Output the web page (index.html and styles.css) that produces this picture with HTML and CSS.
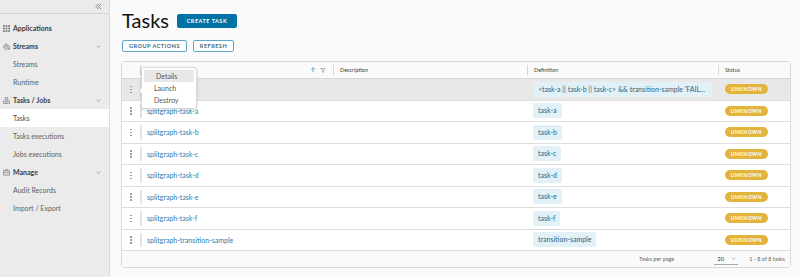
FILE: index.html
```html
<!DOCTYPE html>
<html lang="en">
<head>
    <meta charset="UTF-8">
    <meta name="viewport" content="width=device-width, initial-scale=1.0">
    <title>Tasks</title>
    <link rel="stylesheet" href="styles.css">
</head>
<body>
    <div class="app">
        <nav class="sidebar">
            <div class="sidebar-top">
                <svg class="collapse" viewBox="0 0 8 8" width="7" height="7"><polyline points="4,1 1,4 4,7" /><polyline points="7,1 4,4 7,7" /></svg>
            </div>
            <ul class="nav">
                <li class="nav-title">
                    <svg class="nav-icon" viewBox="0 0 8 8"><g class="fill"><rect x="0" y="0" width="2" height="2"/><rect x="3" y="0" width="2" height="2"/><rect x="6" y="0" width="2" height="2"/><rect x="0" y="3" width="2" height="2"/><rect x="3" y="3" width="2" height="2"/><rect x="6" y="3" width="2" height="2"/><rect x="0" y="6" width="2" height="2"/><rect x="3" y="6" width="2" height="2"/><rect x="6" y="6" width="2" height="2"/></g></svg>
                    Applications
                </li>
                <li class="nav-title">
                    <svg class="nav-icon" viewBox="0 0 8 8"><path d="M0.5 4.5 L3 1 L7.5 3.5 L7.5 7 L2 7 Z M0.5 4.5 L5 4.5 L7.5 7 M3 1 L5 4.5" /></svg>
                    Streams
                    <svg class="chevron" viewBox="0 0 8 8"><polyline points="1,2.5 4,5.5 7,2.5" /></svg>
                </li>
                <li class="nav-link">Streams</li>
                <li class="nav-link">Runtime</li>
                <li class="nav-title">
                    <svg class="nav-icon" viewBox="0 0 8 8"><path d="M2.5 0.5 H5.5 V3 H2.5 Z M0.5 4.5 H3.5 V7.5 H0.5 Z M4.5 4.5 H7.5 V7.5 H4.5 Z" /></svg>
                    Tasks / Jobs
                    <svg class="chevron" viewBox="0 0 8 8"><polyline points="1,2.5 4,5.5 7,2.5" /></svg>
                </li>
                <li class="nav-link active">Tasks</li>
                <li class="nav-link">Tasks executions</li>
                <li class="nav-link">Jobs executions</li>
                <li class="nav-title">
                    <svg class="nav-icon" viewBox="0 0 8 8"><path d="M0.5 2 H7.5 V7 H0.5 Z M2.7 2 V0.8 H5.3 V2 M0.5 4.2 H7.5" /></svg>
                    Manage
                    <svg class="chevron" viewBox="0 0 8 8"><polyline points="1,2.5 4,5.5 7,2.5" /></svg>
                </li>
                <li class="nav-link">Audit Records</li>
                <li class="nav-link">Import / Export</li>
            </ul>
        </nav>

        <main class="content">
            <div class="title-row">
                <h1>Tasks</h1>
                <button class="btn btn-primary">Create task</button>
            </div>
            <div class="actions">
                <button class="btn btn-outline">Group actions</button>
                <button class="btn btn-outline">Refresh</button>
            </div>

            <div class="datagrid">
                <div class="dg-row dg-head">
                    <div class="dg-action"></div>
                    <div class="dg-th name-head">
                        <span class="sort">
                            <svg viewBox="0 0 8 8" width="6" height="6"><path class="up" d="M4 1 V7 M1.8 3.2 L4 1 L6.2 3.2" /></svg>
                            <svg viewBox="0 0 8 8" width="6" height="6"><path class="funnel" d="M1 2 H7 L4.6 4.6 V7 H3.4 V4.6 Z" /></svg>
                        </span>
                    </div>
                    <div class="dg-th">Description</div>
                    <div class="dg-th">Definition</div>
                    <div class="dg-th">Status</div>
                </div>

                <div class="dg-row selected">
                    <div class="dg-action"><span class="kebab"></span></div>
                    <div class="dg-td name"></div>
                    <div class="dg-td"></div>
                    <div class="dg-td"><span class="def long">&lt;task-a || task-b || task-c&gt; &amp;&amp; transition-sample 'FAIL...</span></div>
                    <div class="dg-td"><span class="status">UNKNOWN</span></div>
                </div>
                <div class="dg-row">
                    <div class="dg-action"><span class="kebab"></span></div>
                    <div class="dg-td name"><a href="#">splitgraph-task-a</a></div>
                    <div class="dg-td"></div>
                    <div class="dg-td"><span class="def">task-a</span></div>
                    <div class="dg-td"><span class="status">UNKNOWN</span></div>
                </div>
                <div class="dg-row">
                    <div class="dg-action"><span class="kebab"></span></div>
                    <div class="dg-td name"><a href="#">splitgraph-task-b</a></div>
                    <div class="dg-td"></div>
                    <div class="dg-td"><span class="def">task-b</span></div>
                    <div class="dg-td"><span class="status">UNKNOWN</span></div>
                </div>
                <div class="dg-row">
                    <div class="dg-action"><span class="kebab"></span></div>
                    <div class="dg-td name"><a href="#">splitgraph-task-c</a></div>
                    <div class="dg-td"></div>
                    <div class="dg-td"><span class="def">task-c</span></div>
                    <div class="dg-td"><span class="status">UNKNOWN</span></div>
                </div>
                <div class="dg-row">
                    <div class="dg-action"><span class="kebab"></span></div>
                    <div class="dg-td name"><a href="#">splitgraph-task-d</a></div>
                    <div class="dg-td"></div>
                    <div class="dg-td"><span class="def">task-d</span></div>
                    <div class="dg-td"><span class="status">UNKNOWN</span></div>
                </div>
                <div class="dg-row">
                    <div class="dg-action"><span class="kebab"></span></div>
                    <div class="dg-td name"><a href="#">splitgraph-task-e</a></div>
                    <div class="dg-td"></div>
                    <div class="dg-td"><span class="def">task-e</span></div>
                    <div class="dg-td"><span class="status">UNKNOWN</span></div>
                </div>
                <div class="dg-row">
                    <div class="dg-action"><span class="kebab"></span></div>
                    <div class="dg-td name"><a href="#">splitgraph-task-f</a></div>
                    <div class="dg-td"></div>
                    <div class="dg-td"><span class="def">task-f</span></div>
                    <div class="dg-td"><span class="status">UNKNOWN</span></div>
                </div>
                <div class="dg-row">
                    <div class="dg-action"><span class="kebab"></span></div>
                    <div class="dg-td name"><a href="#">splitgraph-transition-sample</a></div>
                    <div class="dg-td"></div>
                    <div class="dg-td"><span class="def">transition-sample</span></div>
                    <div class="dg-td"><span class="status">UNKNOWN</span></div>
                </div>

                <div class="dg-footer">
                    <span class="per-page">Tasks per page</span>
                    <span class="page-select">20
                        <svg viewBox="0 0 8 8" width="5" height="5"><polyline points="1,2.5 4,5.5 7,2.5" /></svg>
                    </span>
                    <span class="range">1 - 8 of 8 tasks</span>
                </div>

                <div class="menu">
                    <div class="menu-item hover">Details</div>
                    <div class="menu-item">Launch</div>
                    <div class="menu-item">Destroy</div>
                </div>
            </div>
        </main>
    </div>
</body>
</html>
```

FILE: styles.css
```css
* {
    box-sizing: border-box;
}
body {
    margin: 0;
    font-family: Lato, "Noto Sans", sans-serif;
    background-color: #fafafa;
    color: #565656;
}
.app {
    display: flex;
    height: 277px;
    overflow: hidden;
}

/* sidebar */
.sidebar {
    width: 110px;
    flex-shrink: 0;
    background-color: #ebebeb;
    border-right: 1px solid #dcdcdc;
}
.sidebar-top {
    height: 14px;
    border-bottom: 1px solid #d6d6d6;
    display: flex;
    justify-content: flex-end;
    align-items: center;
    padding-right: 7px;
}
.collapse polyline {
    fill: none;
    stroke: #777;
    stroke-width: 1;
}
.nav {
    list-style: none;
    margin: 5px 0 0;
    padding: 0;
}
.nav li {
    height: 18px;
    display: flex;
    align-items: center;
    font-size: 7px;
}
.nav-title {
    padding-left: 3px;
    font-weight: bold;
    color: #3b3b3b;
}
.nav-icon {
    width: 7px;
    height: 7px;
    margin-right: 3px;
}
.nav-icon path {
    fill: none;
    stroke: #7a7a7a;
    stroke-width: 0.8;
}
.nav-icon .fill rect {
    fill: #7a7a7a;
}
.chevron {
    width: 5px;
    height: 5px;
    margin-left: auto;
    margin-right: 8px;
}
.chevron polyline {
    fill: none;
    stroke: #888;
    stroke-width: 1;
}
.nav-link {
    padding-left: 13px;
    color: #5f5f5f;
}
.nav-link.active {
    background-color: #fff;
    color: #4a4a4a;
}

/* main */
.content {
    flex: 1;
    padding: 8px 9px 0 11px;
    min-width: 0;
}
.title-row {
    display: flex;
    align-items: center;
    gap: 8px;
    height: 24px;
}
h1 {
    margin: 0;
    font-size: 20px;
    font-weight: 400;
    color: #111;
    line-height: 24px;
    padding-left: 1px;
}
.btn {
    font-family: inherit;
    font-size: 5.5px;
    font-weight: bold;
    letter-spacing: 0.5px;
    text-transform: uppercase;
    border-radius: 2px;
    cursor: pointer;
    padding: 0;
}
.btn-primary {
    width: 60px;
    height: 14px;
    background-color: #0072a3;
    color: #fff;
    border: none;
    margin-top: 1px;
}
.btn-outline {
    height: 12px;
    background-color: #fff;
    border: 1px solid #5fa7c9;
    color: #3e6a82;
}
.btn-outline:first-child {
    width: 65px;
}
.btn-outline:last-child {
    width: 41px;
}
.actions {
    display: flex;
    gap: 6px;
    margin-top: 8px;
    padding-left: 1px;
}

/* datagrid */
.datagrid {
    position: relative;
    margin-top: 9px;
    background-color: #fff;
    border: 1px solid #d9d9d9;
    border-radius: 3px;
}
.dg-row {
    display: grid;
    grid-template-columns: 18px 193px 194px 191px 1fr;
    height: 21.5px;
    border-bottom: 1px solid #dedede;
}
.dg-head {
    height: 17px;
    background-color: #fafafa;
    border-bottom: 1px solid #d6d6d6;
    font-size: 5.5px;
    color: #444;
}
.dg-row.selected {
    background-color: #e8e8e8;
}
.dg-th {
    margin: 3px 0;
    border-left: 1px solid #d6d6d6;
    padding-left: 6px;
    display: flex;
    align-items: center;
}
.name-head {
    justify-content: flex-end;
    padding-right: 7px;
}
.sort {
    display: flex;
    gap: 4px;
}
.sort .up {
    fill: none;
    stroke: #49a7d3;
    stroke-width: 1.2;
}
.sort .funnel {
    fill: none;
    stroke: #999;
    stroke-width: 0.9;
}
.dg-action {
    display: flex;
    align-items: center;
    justify-content: center;
}
.kebab {
    width: 1.5px;
    height: 1.5px;
    background-color: #8a8a8a;
    border-radius: 50%;
    box-shadow: 0 -3px 0 #8a8a8a, 0 3px 0 #8a8a8a;
}
.dg-td {
    display: flex;
    align-items: center;
    padding-left: 6px;
    font-size: 7px;
    min-width: 0;
}
.dg-td.name {
    margin: 3px 0;
    border-left: 2px solid #e3e3e3;
    padding-left: 5px;
}
.dg-row.selected .dg-td.name {
    border-left-color: #d8d8d8;
}
.dg-td a {
    color: #1a7fb5;
    text-decoration: none;
    font-size: 7px;
}
.def {
    display: inline-block;
    background-color: #e1f1f7;
    color: #2b6484;
    height: 15px;
    line-height: 15px;
    padding: 0 5px;
    border-radius: 2px;
    white-space: nowrap;
    overflow: hidden;
}
.def.long {
    width: 179px;
}
.status {
    display: inline-block;
    margin-left: 1px;
    width: 43px;
    height: 10px;
    line-height: 10px;
    border-radius: 5px;
    background-color: #e3b33c;
    color: #fff;
    font-size: 5px;
    font-weight: bold;
    letter-spacing: 0.5px;
    text-align: center;
}
.dg-footer {
    height: 16px;
    background-color: #fafafa;
    display: flex;
    justify-content: flex-end;
    align-items: center;
    font-size: 5.5px;
    color: #666;
    padding-right: 5px;
}
.per-page {
    margin-right: 40px;
}
.page-select {
    width: 24px;
    display: flex;
    align-items: center;
    justify-content: space-between;
    padding: 0 2px 2px 3px;
    border-bottom: 1px solid #aaa;
    color: #333;
    font-size: 6px;
    margin-top: 2px;
    margin-right: 11px;
}
.page-select polyline {
    fill: none;
    stroke: #999;
    stroke-width: 1;
}

/* row action menu */
.menu {
    position: absolute;
    left: 19px;
    top: 5px;
    width: 56px;
    padding: 2px;
    background-color: #fff;
    border: 1px solid #d7d7d7;
    border-radius: 2px;
    box-shadow: 0 1px 3px rgba(0, 0, 0, 0.15);
}
.menu::before {
    content: "";
    position: absolute;
    left: -3px;
    top: 20px;
    width: 4px;
    height: 4px;
    background-color: #fff;
    border-left: 1px solid #d7d7d7;
    border-bottom: 1px solid #d7d7d7;
    transform: rotate(45deg);
}
.menu-item {
    height: 12px;
    line-height: 12px;
    font-size: 7px;
    color: #555;
    padding-left: 10px;
}
.menu-item.hover {
    background-color: #e8e8e8;
    padding-left: 12px;
}
```
